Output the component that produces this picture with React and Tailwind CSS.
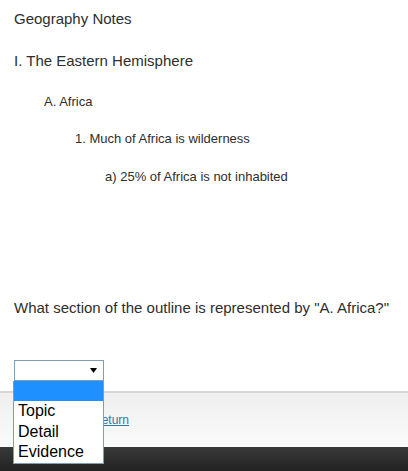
import React from 'react';

const outline = [
  { text: 'I. The Eastern Hemisphere', cls: 'mt-[25px] pl-[14px] text-[15px] leading-[17px]' },
  { text: 'A. Africa', cls: 'mt-[25px] pl-[44px] text-[13px] leading-[15px]' },
  { text: '1. Much of Africa is wilderness', cls: 'mt-[22px] pl-[75px] text-[13px] leading-[15px]' },
  { text: 'a) 25% of Africa is not inhabited', cls: 'mt-[23px] pl-[105px] text-[13px] leading-[15px]' },
];

const options = ['Topic', 'Detail', 'Evidence'];

export default function App() {
  return (
    <div className="relative h-[471px] w-[408px] overflow-hidden bg-white text-[#2e2e2e] [font-family:'Liberation_Sans',Arial,sans-serif]">
      <div className="pt-[10px]">
        <p className="pl-[14px] text-[15px] leading-[17px]">Geography Notes</p>
        {outline.map((item) => (
          <p key={item.text} className={item.cls}>
            {item.text}
          </p>
        ))}
        <p className="mt-[115px] pl-[14px] text-[15px] leading-[17px]">
          What section of the outline is represented by "A. Africa?"
        </p>

        <div className="relative ml-[14px] mt-[44px] h-[21px] w-[90px]">
          <div className="flex h-full w-full items-center justify-end border border-[#7f9db9] bg-white pr-[6px]">
            <svg width="7" height="5" viewBox="0 0 7 5" className="fill-black">
              <path d="M0 0h7L3.5 5z" />
            </svg>
          </div>
        </div>
      </div>

      {/* footer */}
      <div className="mt-[10px] flex h-[56px] items-center border-t-2 border-[#d6d6d6] bg-gradient-to-b from-[#efefef] to-[#fbfbfb] pl-[93px]">
        <a href="#" className="text-[12px] text-[#2b7ea5] underline">
          Return
        </a>
      </div>
      <div className="h-[24px] bg-gradient-to-b from-[#3a3a3a] to-[#222]" />

      {/* open select list */}
      <div className="absolute left-[13px] top-[381px] w-[91px] border border-[#7f9db9] border-t-0 bg-white">
        <div className="h-[20px] bg-[#1e90ff]" />
        {options.map((o) => (
          <div key={o} className="h-[20.5px] pl-[4px] text-[16px] leading-[20px] text-black">
            {o}
          </div>
        ))}
      </div>
    </div>
  );
}
